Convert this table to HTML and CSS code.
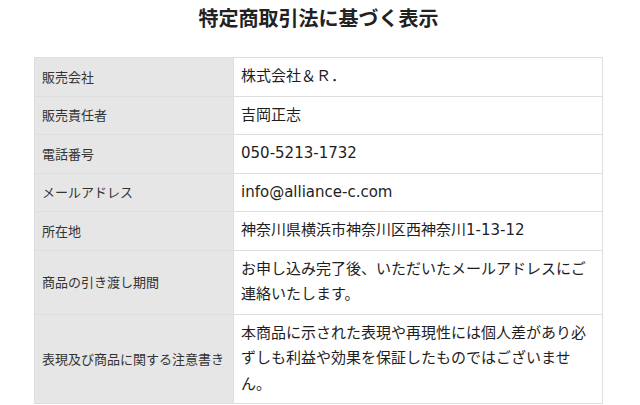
FILE: index.html
```html
<!DOCTYPE html>
<html lang="ja">
<head>
    <meta charset="UTF-8">
    <meta name="viewport" content="width=device-width, initial-scale=1.0">
    <title>特定商取引法に基づく表示</title>
    <link rel="stylesheet" href="styles.css">
</head>
<body>

    <div class="page">
        <!-- title -->
        <h1 class="page-title">特定商取引法に基づく表示</h1>

        <!-- law table -->
        <table class="law-table">
            <colgroup>
                <col class="col-label">
                <col class="col-value">
            </colgroup>
            <tr>
                <th>販売会社</th>
                <td>株式会社＆Ｒ．</td>
            </tr>
            <tr>
                <th>販売責任者</th>
                <td>吉岡正志</td>
            </tr>
            <tr>
                <th>電話番号</th>
                <td>050-5213-1732</td>
            </tr>
            <tr>
                <th>メールアドレス</th>
                <td>info@alliance-c.com</td>
            </tr>
            <tr>
                <th>所在地</th>
                <td>神奈川県横浜市神奈川区西神奈川1-13-12</td>
            </tr>
            <tr>
                <th>商品の引き渡し期間</th>
                <td>お申し込み完了後、いただいたメールアドレスにご連絡いたします。</td>
            </tr>
            <tr>
                <th>表現及び商品に関する注意書き</th>
                <td>本商品に示された表現や再現性には個人差があり必ずしも利益や効果を保証したものではございません。</td>
            </tr>
        </table>
    </div>

</body>
</html>
```

FILE: styles.css
```css
body {
    margin: 0;
    padding: 0;
    background: #fff;
    color: #222;
    font-family: "DejaVu Sans", "Noto Sans CJK JP", sans-serif;
}

.page {
    width: 569px;
    margin-left: 34px;
}

/* title */
.page-title {
    margin: 3px 0 0;
    font-family: "Noto Sans CJK JP", sans-serif;
    font-size: 20px;
    font-weight: 700;
    line-height: 30px;
    text-align: center;
    color: #222;
}

/* table */
.law-table {
    width: 569px;
    margin-top: 24px;
    border-collapse: collapse;
    table-layout: fixed;
}

.col-label {
    width: 199px;
}

.law-table th,
.law-table td {
    border: 1px solid #dedede;
    padding: 6px 7px;
    line-height: 1.7;
    text-align: left;
    vertical-align: middle;
}

.law-table th {
    background: #e6e6e6;
    font-family: "Noto Sans CJK JP", sans-serif;
    font-size: 13px;
    font-weight: 400;
    color: #333;
    white-space: nowrap;
}

.law-table td {
    background: #fff;
    font-size: 15px;
    color: #1e1e1e;
}
```
